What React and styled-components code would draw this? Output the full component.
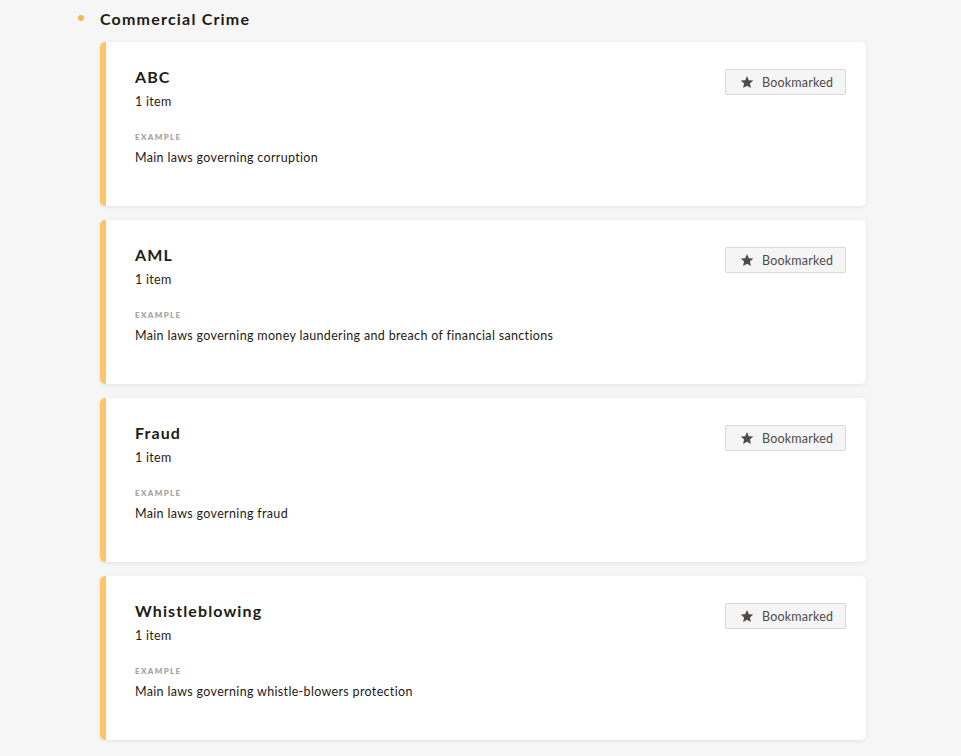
import React from "react";
import styled, { createGlobalStyle } from "styled-components";

const Global = createGlobalStyle`
  body {
    margin: 0;
    background: #f6f6f6;
    font-family: "Lato", "Open Sans", sans-serif;
    color: #1f1a17;
  }
`;

const Page = styled.div`
  padding: 7px 0 16px 78px;
  width: 788px;
`;

const SectionHead = styled.div`
  display: flex;
  align-items: center;
  height: 22px;
  margin-bottom: 13px;
`;

const Dot = styled.span`
  width: 6px;
  height: 6px;
  border-radius: 50%;
  background: #f7b552;
  margin-right: 16px;
`;

const SectionTitle = styled.h2`
  margin: 0;
  font-size: 16px;
  font-weight: 700;
  letter-spacing: 1.2px;
  color: #221b15;
`;

const List = styled.div`
  display: flex;
  flex-direction: column;
  gap: 14px;
  margin-left: 22px;
`;

const Card = styled.div`
  display: flex;
  justify-content: space-between;
  align-items: flex-start;
  height: 164px;
  box-sizing: border-box;
  background: #fff;
  border-left: 6px solid #ffc56c;
  border-radius: 5px;
  box-shadow: 0 1px 4px rgba(0, 0, 0, 0.08);
  padding: 25px 20px 0 29px;
`;

const Body = styled.div`
  display: flex;
  flex-direction: column;
`;

const Title = styled.h3`
  margin: 0;
  font-size: 16px;
  font-weight: 700;
  letter-spacing: 1.1px;
  line-height: 20px;
  color: #221b15;
`;

const Count = styled.div`
  font-size: 12.5px;
  letter-spacing: 0.3px;
  margin-top: 7px;
  line-height: 16px;
`;

const Label = styled.div`
  font-size: 8px;
  font-weight: 800;
  letter-spacing: 1.3px;
  color: #a9a6a3;
  margin-top: 22px;
  line-height: 10px;
`;

const Desc = styled.div`
  font-size: 12.5px;
  letter-spacing: 0.33px;
  margin-top: 8px;
  line-height: 16px;
`;

const Button = styled.button`
  display: flex;
  align-items: center;
  gap: 8px;
  height: 26px;
  box-sizing: border-box;
  width: 121px;
  margin-top: 2px;
  padding: 0 0 0 14px;
  background: #f5f5f5;
  border: 1px solid #d9d9d9;
  border-radius: 2px;
  font-family: inherit;
  font-size: 12.5px;
  letter-spacing: 0.2px;
  color: #4f4b48;
  cursor: pointer;
`;

const Star = () => (
  <svg width="14" height="14" viewBox="0 0 24 24">
    <path
      fill="#4f4b48"
      d="M12 1.8l3.1 7.1 7.7.7-5.8 5.1 1.7 7.6L12 18.3l-6.7 4 1.7-7.6-5.8-5.1 7.7-.7z"
    />
  </svg>
);

const items = [
  { title: "ABC", desc: "Main laws governing corruption" },
  { title: "AML", desc: "Main laws governing money laundering and breach of financial sanctions" },
  { title: "Fraud", desc: "Main laws governing fraud" },
  { title: "Whistleblowing", desc: "Main laws governing whistle-blowers protection" },
];

export default function App() {
  return (
    <>
      <Global />
      <Page>
        <SectionHead>
          <Dot />
          <SectionTitle>Commercial Crime</SectionTitle>
        </SectionHead>
        <List>
          {items.map((it) => (
            <Card key={it.title}>
              <Body>
                <Title>{it.title}</Title>
                <Count>1 item</Count>
                <Label>EXAMPLE</Label>
                <Desc>{it.desc}</Desc>
              </Body>
              <Button>
                <Star />
                Bookmarked
              </Button>
            </Card>
          ))}
        </List>
      </Page>
    </>
  );
}
